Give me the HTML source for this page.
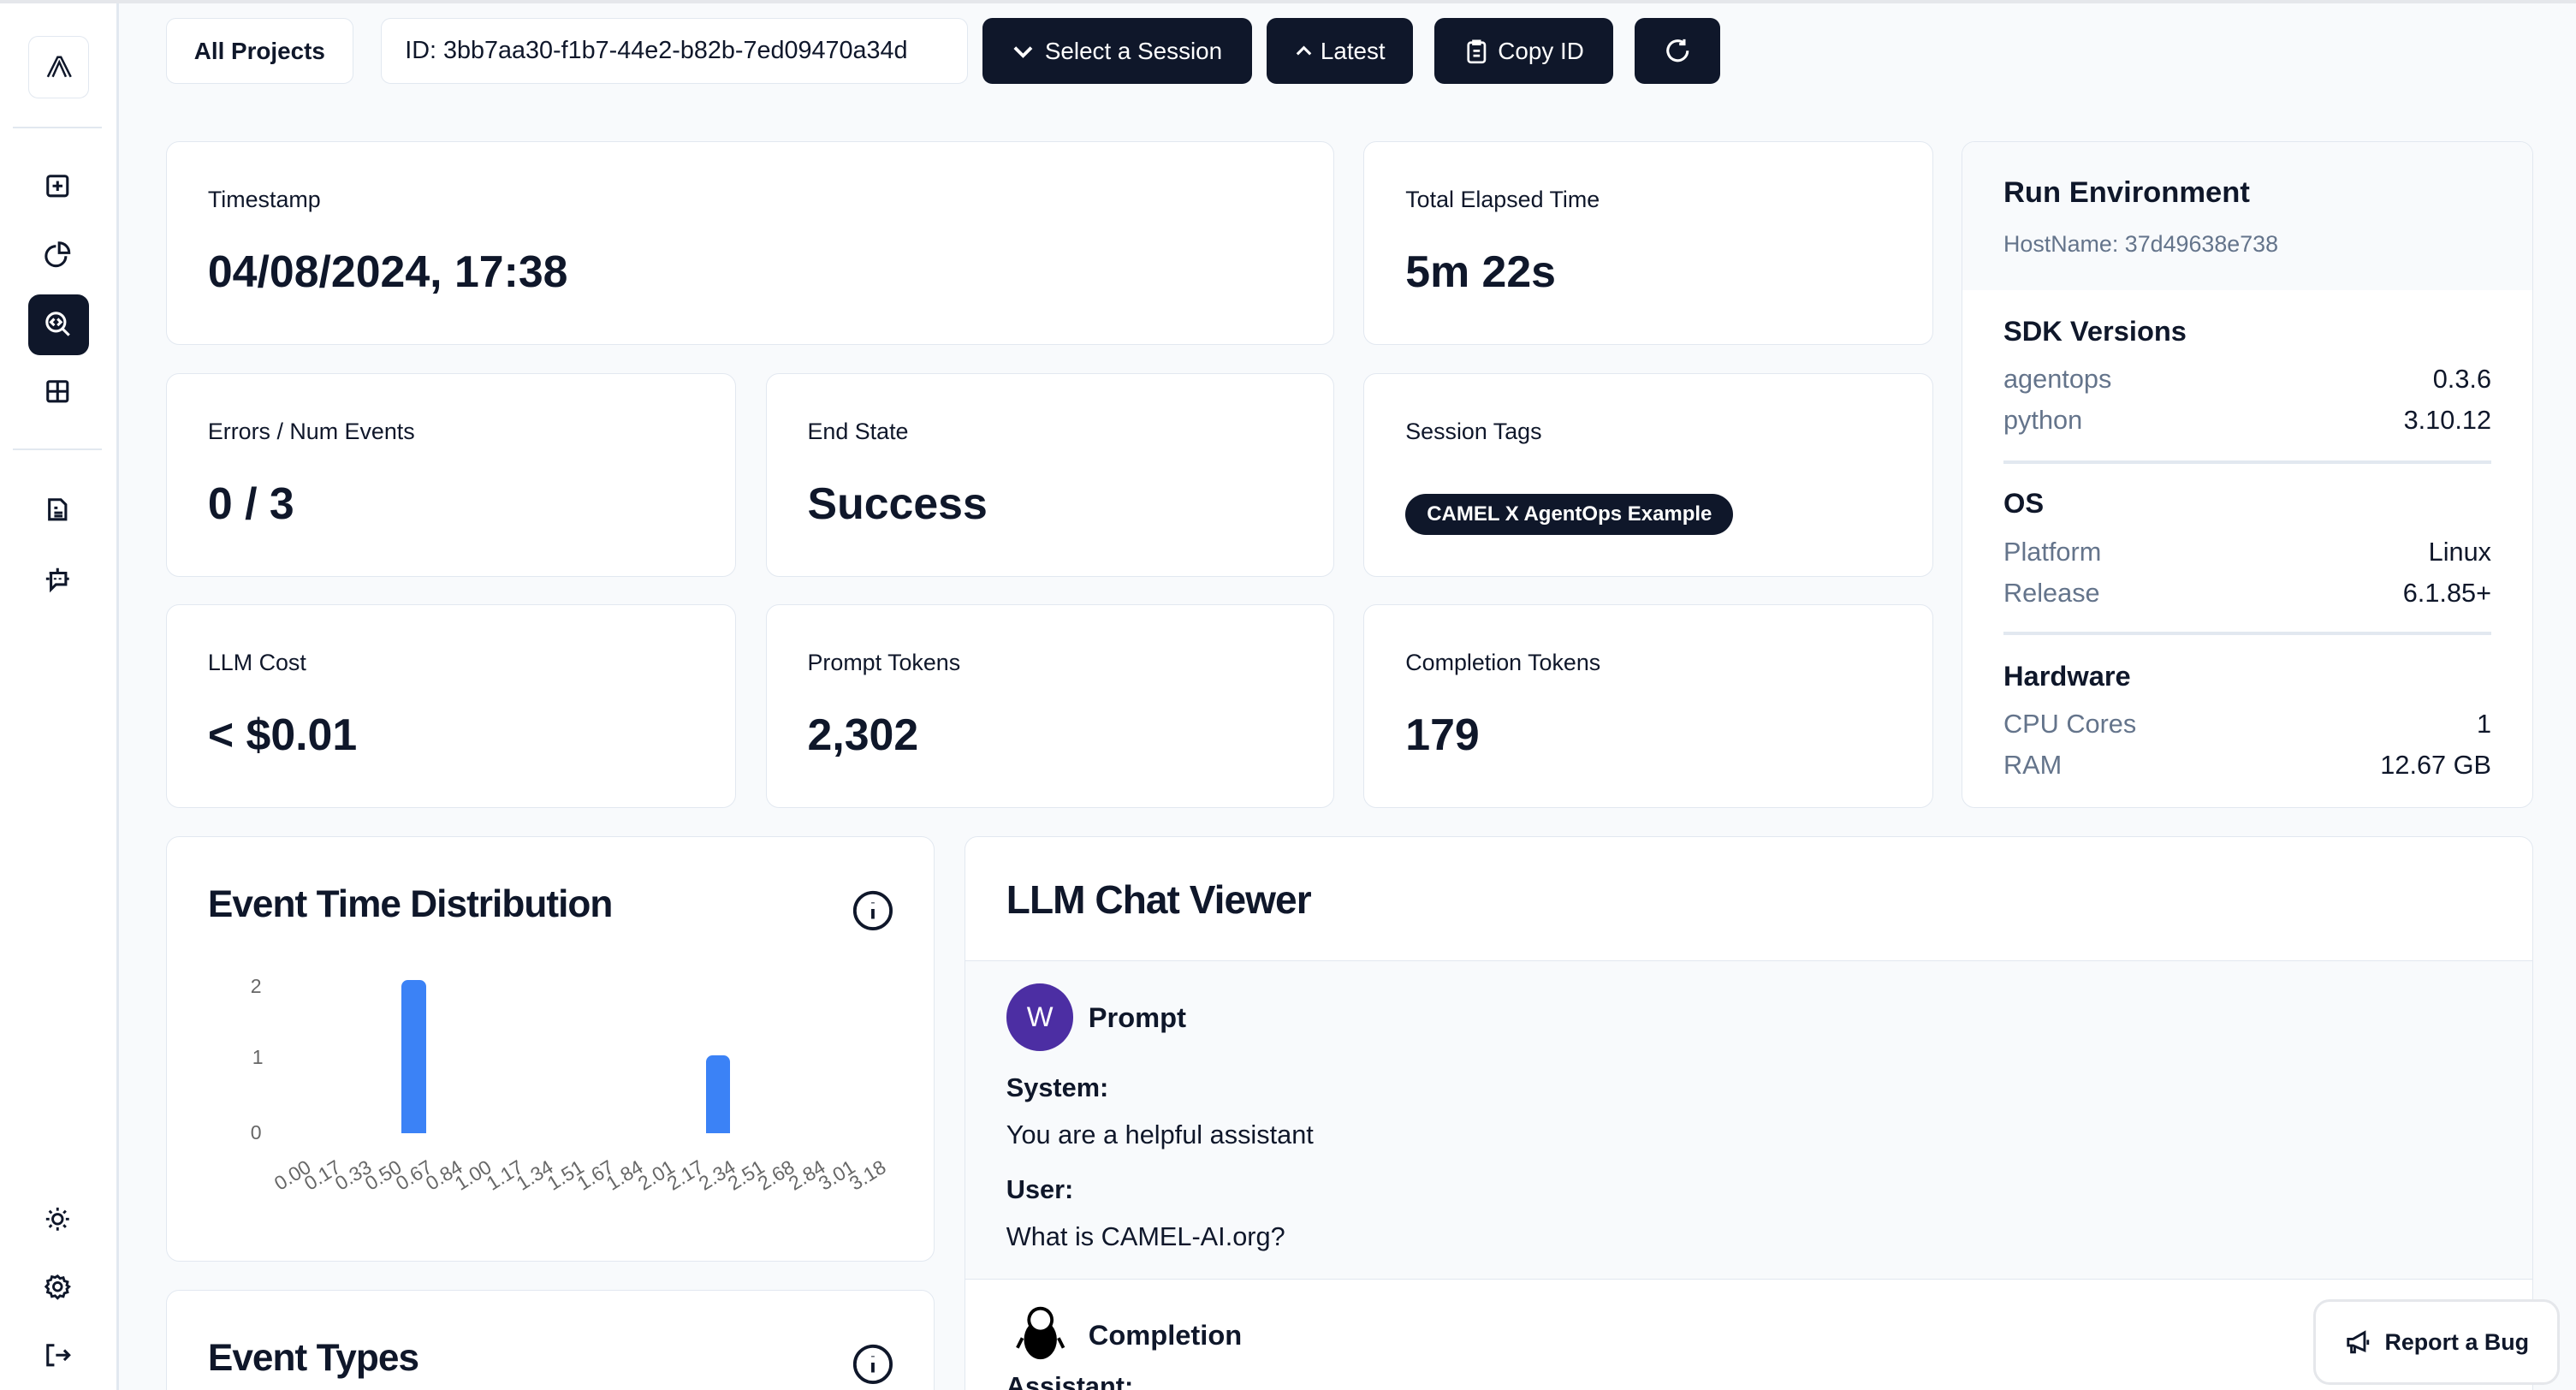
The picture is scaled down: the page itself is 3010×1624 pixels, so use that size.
<!DOCTYPE html>
<html><head><meta charset="utf-8"><style>
html,body{margin:0;padding:0;width:3010px;height:1624px;overflow:hidden;background:#f8fafc}
#r{zoom:1.9196;width:1568px;height:846px;position:relative;font-family:"Liberation Sans",sans-serif;color:#0f172a;overflow:hidden}
.a{position:absolute}
.card{position:absolute;background:#fff;border:1px solid #e2e8f0;border-radius:8px;box-sizing:border-box;overflow:hidden}
.lbl{position:absolute;left:25px;top:27px;font-size:14px}
.val{position:absolute;left:25px;top:63px;font-size:27px;font-weight:bold}
.btn{position:absolute;top:11px;height:40px;box-sizing:border-box;border-radius:6px;font-size:14.5px;display:flex;align-items:center;justify-content:center}
.w{background:#fff;border:1px solid #e2e8f0}
.d{background:#0f172a;color:#fff}
.ic{position:absolute;left:26px;width:18px;height:18px}
.row{position:absolute;left:25px;right:25px;font-size:16px;display:flex;justify-content:space-between}
.row span:first-child{color:#64748b}
.h{position:absolute;left:25px;font-size:17px;font-weight:bold}
.hr{position:absolute;left:25px;right:25px;height:2px;background:#e2e8f0}
.xl{position:absolute;font-size:12px;color:#666;white-space:nowrap;transform:rotate(-32deg);transform-origin:100% 0;top:194px}
</style></head><body><div id="r">
<div class="a" style="left:0;top:0;width:1568px;height:2px;background:#e5e7eb"></div>
<div class="a" style="left:0;top:2px;width:71px;height:844px;background:#fff;border-right:2px solid #e2e8f0"></div>
<div class="a" style="left:17px;top:22px;width:37px;height:38px;border:1px solid #e2e8f0;border-radius:6px;box-sizing:border-box"></div>
<svg class="a" style="left:27px;top:32px" width="18" height="18" viewBox="0 0 18 18" fill="none" stroke="#0f172a" stroke-width="1.3"><path d="M2 15 L8 3 L10 3 L16 15 M5 15 L9 6 L13 15"/></svg>
<div class="a" style="left:8px;top:77px;width:54px;height:1px;background:#e2e8f0"></div>
<div class="a" style="left:8px;top:273px;width:54px;height:1px;background:#e2e8f0"></div>
<svg class="ic" style="top:104px" viewBox="0 0 18 18" fill="none" stroke="#0f172a" stroke-width="1.6"><rect x="3" y="3" width="12" height="12" rx="1.5"/><path d="M9 6v6M6 9h6"/></svg>
<svg class="ic" style="top:146px" viewBox="0 0 18 18" fill="none" stroke="#0f172a" stroke-width="1.6"><path d="M8 4a6 6 0 1 0 6 6"/><path d="M10 2a6 6 0 0 1 6 6h-6z"/></svg>
<div class="a" style="left:17px;top:179px;width:37px;height:37px;background:#0f172a;border-radius:7px"></div>
<svg class="ic" style="top:188px" viewBox="0 0 18 18" fill="none" stroke="#fff" stroke-width="1.6"><circle cx="8" cy="8" r="5.5"/><path d="M12 12l4 4M7 6l-2 2 2 2M9 6l2 2-2 2"/></svg>
<svg class="ic" style="top:229px" viewBox="0 0 18 18" fill="none" stroke="#0f172a" stroke-width="1.6"><rect x="3" y="3" width="12" height="12" rx="1"/><path d="M3 9h12M9 3v12"/></svg>
<svg class="ic" style="top:301px" viewBox="0 0 18 18" fill="none" stroke="#0f172a" stroke-width="1.6"><path d="M4 3h7l3 3v9H4z"/><path d="M7 8h2M7 11h5M7 13h5"/></svg>
<svg class="ic" style="top:343px" viewBox="0 0 18 18" fill="none" stroke="#0f172a" stroke-width="1.6"><path d="M9 3v3M4 6h10v7H8l-3 3V6z"/><path d="M2 9.5h2M14 9.5h2M7.5 9v1M10.5 9v1"/></svg>
<svg class="ic" style="top:733px" viewBox="0 0 18 18" fill="none" stroke="#0f172a" stroke-width="1.5"><circle cx="9" cy="9" r="3"/><path d="M9 2v2M9 14v2M2 9h2M14 9h2M4 4l1.4 1.4M12.6 12.6L14 14M4 14l1.4-1.4M12.6 5.4L14 4"/></svg>
<svg class="ic" style="top:774px" viewBox="0 0 18 18" fill="none" stroke="#0f172a" stroke-width="1.5"><circle cx="9" cy="9" r="2.5"/><path d="M9 2.5l1.5 1.5 2-.5.6 2 2 .6-.5 2L16 9l-1.4 1.4.5 2-2 .6-.6 2-2-.5L9 16l-1.5-1.5-2 .5-.6-2-2-.6.5-2L2 9l1.4-1.5-.5-2 2-.6.6-2 2 .5z"/></svg>
<svg class="ic" style="top:816px" viewBox="0 0 18 18" fill="none" stroke="#0f172a" stroke-width="1.6"><path d="M7 3H3v12h4M8 9h8M13 6l3 3-3 3"/></svg>
<div class="btn w" style="left:101px;width:114px;font-weight:bold">All Projects</div>
<div class="btn w" style="left:232px;width:357px;justify-content:flex-start;padding-left:14px;font-size:15px">ID: 3bb7aa30-f1b7-44e2-b82b-7ed09470a34d</div>
<div class="btn d" style="left:598px;width:164px"><svg width="14" height="14" viewBox="0 0 14 14" fill="none" stroke="#fff" stroke-width="2" style="margin-right:6px"><path d="M2 5l5 5 5-5"/></svg>Select a Session</div>
<div class="btn d" style="left:771px;width:89px"><svg width="12" height="12" viewBox="0 0 12 12" fill="none" stroke="#fff" stroke-width="1.6" style="margin-right:4px"><path d="M2 8l4-4 4 4"/></svg>Latest</div>
<div class="btn d" style="left:873px;width:109px"><svg width="16" height="16" viewBox="0 0 16 16" fill="none" stroke="#fff" stroke-width="1.4" style="margin-right:5px"><rect x="3" y="3" width="10" height="12" rx="1.5"/><path d="M6 2h4v2H6zM6 8h4M6 11h4"/></svg>Copy ID</div>
<div class="btn d" style="left:995px;width:52px"><svg width="18" height="18" viewBox="0 0 18 18" fill="none" stroke="#fff" stroke-width="1.6"><path d="M15 9a6 6 0 1 1-2-4.5M13 2v3h-3"/></svg></div>
<div class="card" style="left:101px;top:86px;width:711px;height:124px"><div class="lbl">Timestamp</div><div class="val">04/08/2024, 17:38</div></div>
<div class="card" style="left:830px;top:86px;width:347px;height:124px"><div class="lbl">Total Elapsed Time</div><div class="val">5m 22s</div></div>
<div class="card" style="left:101px;top:227px;width:347px;height:124px"><div class="lbl">Errors / Num Events</div><div class="val">0 / 3</div></div>
<div class="card" style="left:466px;top:227px;width:346px;height:124px"><div class="lbl">End State</div><div class="val">Success</div></div>
<div class="card" style="left:830px;top:227px;width:347px;height:124px"><div class="lbl">Session Tags</div><div class="a" style="left:25px;top:73px;height:25px;padding:0 13px;background:#0f172a;color:#fff;border-radius:13px;font-size:12.5px;font-weight:bold;line-height:25px">CAMEL X AgentOps Example</div></div>
<div class="card" style="left:101px;top:368px;width:347px;height:124px"><div class="lbl">LLM Cost</div><div class="val">&lt; $0.01</div></div>
<div class="card" style="left:466px;top:368px;width:346px;height:124px"><div class="lbl">Prompt Tokens</div><div class="val">2,302</div></div>
<div class="card" style="left:830px;top:368px;width:347px;height:124px"><div class="lbl">Completion Tokens</div><div class="val">179</div></div>
<div class="card" style="left:1194px;top:86px;width:348px;height:406px">
<div class="a" style="left:0;top:0;right:0;height:90px;background:#f8fafc"></div>
<div class="h" style="top:21px;font-size:18px">Run Environment</div>
<div class="a" style="left:25px;top:54px;font-size:14px;color:#64748b">HostName: 37d49638e738</div>
<div class="h" style="top:105px">SDK Versions</div>
<div class="row" style="top:135px"><span>agentops</span><span>0.3.6</span></div>
<div class="row" style="top:160px"><span>python</span><span>3.10.12</span></div>
<div class="hr" style="top:194px"></div>
<div class="h" style="top:210px">OS</div>
<div class="row" style="top:240px"><span>Platform</span><span>Linux</span></div>
<div class="row" style="top:265px"><span>Release</span><span>6.1.85+</span></div>
<div class="hr" style="top:298px"></div>
<div class="h" style="top:315px">Hardware</div>
<div class="row" style="top:345px"><span>CPU Cores</span><span>1</span></div>
<div class="row" style="top:370px"><span>RAM</span><span>12.67 GB</span></div>
</div>
<div class="card" style="left:101px;top:509px;width:468px;height:259px">
<div class="a" style="left:25px;top:28px;font-size:23px;font-weight:bold;letter-spacing:-0.5px">Event Time Distribution</div>
<svg class="a" style="left:417px;top:32px" width="26" height="26" viewBox="0 0 26 26" fill="none" stroke="#0f172a" stroke-width="2"><circle cx="13" cy="13" r="11"/><path d="M13 12v6M13 8v.5"/></svg>
<div class="a" style="left:51px;top:84px;font-size:12px;color:#666">2</div>
<div class="a" style="left:52px;top:127px;font-size:12px;color:#666">1</div>
<div class="a" style="left:51px;top:173px;font-size:12px;color:#666">0</div>
<div class="a" style="left:143px;top:87px;width:15px;height:93px;background:#3b82f6;border-radius:4px 4px 0 0"></div>
<div class="a" style="left:328px;top:133px;width:15px;height:47px;background:#3b82f6;border-radius:4px 4px 0 0"></div>
<span class="xl" style="right:384px">0.00</span>
<span class="xl" style="right:366px">0.17</span>
<span class="xl" style="right:347px">0.33</span>
<span class="xl" style="right:329px">0.50</span>
<span class="xl" style="right:310px">0.67</span>
<span class="xl" style="right:292px">0.84</span>
<span class="xl" style="right:274px">1.00</span>
<span class="xl" style="right:255px">1.17</span>
<span class="xl" style="right:237px">1.34</span>
<span class="xl" style="right:218px">1.51</span>
<span class="xl" style="right:200px">1.67</span>
<span class="xl" style="right:182px">1.84</span>
<span class="xl" style="right:163px">2.01</span>
<span class="xl" style="right:145px">2.17</span>
<span class="xl" style="right:126px">2.34</span>
<span class="xl" style="right:108px">2.51</span>
<span class="xl" style="right:90px">2.68</span>
<span class="xl" style="right:71px">2.84</span>
<span class="xl" style="right:53px">3.01</span>
<span class="xl" style="right:34px">3.18</span>
</div>
<div class="card" style="left:101px;top:785px;width:468px;height:80px">
<div class="a" style="left:25px;top:28px;font-size:23px;font-weight:bold;letter-spacing:-0.5px">Event Types</div>
<svg class="a" style="left:417px;top:32px" width="26" height="26" viewBox="0 0 26 26" fill="none" stroke="#0f172a" stroke-width="2"><circle cx="13" cy="13" r="11"/><path d="M13 12v6M13 8v.5"/></svg>
</div>
<div class="card" style="left:587px;top:509px;width:955px;height:360px">
<div class="a" style="left:25px;top:24px;font-size:24px;font-weight:bold;letter-spacing:-0.5px">LLM Chat Viewer</div>
<div class="a" style="left:0;top:75px;right:0;height:193px;background:#f8fafc;border-top:1px solid #e2e8f0;border-bottom:1px solid #e2e8f0"></div>
<div class="a" style="left:25px;top:89px;width:41px;height:41px;border-radius:50%;background:#4c2ea3;color:#fff;font-size:17px;text-align:center;line-height:41px">W</div>
<div class="a" style="left:75px;top:100px;font-size:17px;font-weight:bold">Prompt</div>
<div class="a" style="left:25px;top:143px;font-size:16px;font-weight:bold">System:</div>
<div class="a" style="left:25px;top:172px;font-size:16px">You are a helpful assistant</div>
<div class="a" style="left:25px;top:205px;font-size:16px;font-weight:bold">User:</div>
<div class="a" style="left:25px;top:234px;font-size:16px">What is CAMEL-AI.org?</div>
<svg class="a" style="left:30px;top:283px" width="32" height="36" viewBox="0 0 32 36"><ellipse cx="16" cy="23" rx="10" ry="12" fill="#000"/><circle cx="16" cy="11" r="8" fill="#000"/><circle cx="16" cy="11" r="6" fill="#fff"/><path d="M5 22l-3 6M27 22l3 6" stroke="#000" stroke-width="2"/></svg>
<div class="a" style="left:75px;top:293px;font-size:17px;font-weight:bold">Completion</div>
<div class="a" style="left:25px;top:325px;font-size:16px;font-weight:bold">Assistant:</div>
</div>
<div class="a" style="left:1408px;top:791px;width:150px;height:52px;background:#fff;border:2px solid #e5e7eb;border-radius:10px;box-sizing:border-box;display:flex;align-items:center;justify-content:center;font-size:14px;font-weight:bold"><svg width="18" height="18" viewBox="0 0 18 18" fill="none" stroke="#0f172a" stroke-width="1.5" style="margin-right:7px"><path d="M3 7h3l7-4v11l-7-3H3zM5 11v4h2v-4M15 7.5v3"/></svg>Report a Bug</div>
</div></body></html>
